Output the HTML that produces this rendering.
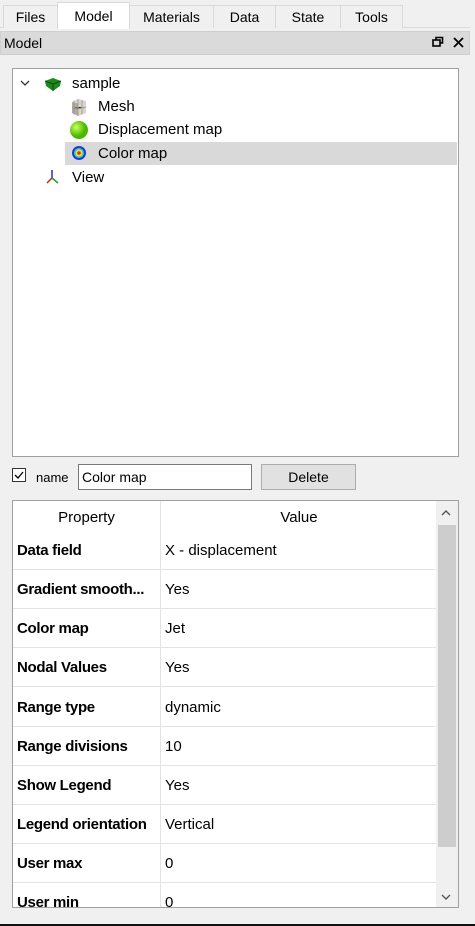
<!DOCTYPE html><html><head><style>
*{margin:0;padding:0;box-sizing:border-box}
body{width:475px;height:926px;background:#f0f0f0;font-family:"Liberation Sans",sans-serif;font-size:15px;color:#000;position:relative;overflow:hidden}
.a{position:absolute}
.tab{position:absolute;top:5px;height:23px;border:1px solid #d9d9d9;border-bottom:none;background:#f0f0f0;text-align:center;line-height:22px;font-size:14px}
.row{position:absolute;left:13px;width:423px;height:39px;border-bottom:1px solid #e3e3e3}
.row .p{position:absolute;left:4px;top:0;line-height:40px;font-weight:bold;letter-spacing:-0.3px}
.row .v{position:absolute;left:152px;top:0;line-height:40px}
</style></head><body>
<div class="a" style="left:0;top:27px;width:470px;height:1px;background:#d9d9d9"></div>
<div class="tab" style="left:3px;width:55px">Files</div>
<div class="tab" style="left:129px;width:85px">Materials</div>
<div class="tab" style="left:213px;width:63px">Data</div>
<div class="tab" style="left:275px;width:66px">State</div>
<div class="tab" style="left:340px;width:63px">Tools</div>
<div class="tab" style="left:57px;top:2px;height:27px;width:73px;background:#fff;line-height:26px">Model</div>
<div class="a" style="left:0;top:31px;width:470px;height:24px;background:#dadada;border:1px solid #cfcfcf"></div>
<div class="a" style="left:4px;top:35px;font-size:14px">Model</div>
<svg class="a" style="left:432px;top:36px" width="12" height="12"><rect x="1" y="4" width="7" height="6" fill="none" stroke="#000" stroke-width="1.6"/><path d="M4 4V1.5h6.5V7H8" fill="none" stroke="#000" stroke-width="1.6"/></svg>
<svg class="a" style="left:453px;top:37px" width="11" height="11"><path d="M1 1L10 10M10 1L1 10" stroke="#000" stroke-width="1.8"/></svg>
<div class="a" style="left:12px;top:68px;width:447px;height:389px;background:#fff;border:1px solid #a0a0a0"></div>
<div class="a" style="left:65px;top:142px;width:392px;height:23px;background:#d9d9d9"></div>
<svg class="a" style="left:20px;top:79px" width="10" height="8"><path d="M1 2L5 6L9 2" fill="none" stroke="#333" stroke-width="1.3"/></svg>
<svg class="a" style="left:43px;top:76px" width="20" height="16"><path d="M2 5L10 2L18 5L17 10L10 15L3 10Z" fill="#1a8a1a"/><path d="M2 5L10 8L18 5M10 8V15" stroke="#0a4a0a" fill="none"/></svg>
<div class="a" style="left:72px;top:75px">sample</div>
<svg class="a" style="left:69px;top:97px" width="20" height="20"><path d="M3 5L9 2L17 4V16L9 19L3 16Z" fill="#d8d4cc"/><path d="M9 2V19M3 10.5L9 12L17 10M5 3.5V17.5M13 3V17.5" stroke="#a8a29a"/><path d="M3 5L9 6.5V19L3 16Z" fill="#8a857d" opacity=".5"/></svg>
<div class="a" style="left:98px;top:98px">Mesh</div>
<svg class="a" style="left:69px;top:120px" width="20" height="20"><defs><radialGradient id="g" cx=".35" cy=".35"><stop offset="0" stop-color="#c8ff60"/><stop offset="1" stop-color="#4ab800"/></radialGradient></defs><circle cx="10" cy="10" r="9" fill="url(#g)"/></svg>
<div class="a" style="left:98px;top:121px">Displacement map</div>
<svg class="a" style="left:71px;top:145px" width="16" height="16"><circle cx="8" cy="8" r="7" fill="#1a3fd0"/><circle cx="8" cy="8" r="5" fill="#2ec9e0"/><circle cx="8" cy="8" r="3.5" fill="#e8e020"/><circle cx="8" cy="8" r="1.8" fill="#e03020"/></svg>
<div class="a" style="left:98px;top:145px">Color map</div>
<svg class="a" style="left:44px;top:168px" width="18" height="18"><path d="M8 2V10" stroke="#2030c0" stroke-width="1.5"/><path d="M8 10L3 15" stroke="#d02020" stroke-width="1.5"/><path d="M8 10L14 15" stroke="#20a020" stroke-width="1.5"/></svg>
<div class="a" style="left:72px;top:169px">View</div>
<div class="a" style="left:12px;top:468px;width:14px;height:14px;border:1px solid #333;background:#fff"></div>
<svg class="a" style="left:13px;top:469px" width="12" height="12"><path d="M2 6L5 9L10 3" fill="none" stroke="#000" stroke-width="1.3"/></svg>
<div class="a" style="left:36px;top:470px;font-size:13px">name</div>
<div class="a" style="left:78px;top:464px;width:174px;height:26px;background:#fff;border:1px solid #7a7a7a;padding:4px 3px;font-size:14px">Color map</div>
<div class="a" style="left:261px;top:464px;width:95px;height:26px;background:#e1e1e1;border:1px solid #adadad;text-align:center;line-height:24px;font-size:14px">Delete</div>
<div class="a" style="left:12px;top:500px;width:447px;height:408px;background:#fff;border:1px solid #a0a0a0;overflow:hidden">
<div class="a" style="left:147px;top:0;width:1px;height:408px;background:#e3e3e3"></div>
<div class="a" style="left:0;top:0;width:147px;line-height:34px;text-align:center">Property</div>
<div class="a" style="left:148px;top:0;width:276px;line-height:34px;text-align:center">Value</div>
<div class="a" style="left:423px;top:0;width:22px;height:406px;background:#f0f0f0"></div>
<div class="a" style="left:425px;top:24px;width:18px;height:322px;background:#cdcdcd"></div>
<svg class="a" style="left:428px;top:8px" width="10" height="8"><path d="M1 6L5 2L9 6" fill="none" stroke="#555" stroke-width="1.4"/></svg>
<svg class="a" style="left:428px;top:392px" width="10" height="8"><path d="M1 2L5 6L9 2" fill="none" stroke="#555" stroke-width="1.4"/></svg>
</div>
<div class="a" style="left:13px;top:531px;width:423px;height:376px;overflow:hidden">
<div class="row" style="left:0;top:0"><span class="p">Data field</span><span class="v">X - displacement</span></div>
<div class="row" style="left:0;top:39px"><span class="p">Gradient smooth...</span><span class="v">Yes</span></div>
<div class="row" style="left:0;top:78px"><span class="p">Color map</span><span class="v">Jet</span></div>
<div class="row" style="left:0;top:117px"><span class="p">Nodal Values</span><span class="v">Yes</span></div>
<div class="row" style="left:0;top:157px"><span class="p">Range type</span><span class="v">dynamic</span></div>
<div class="row" style="left:0;top:196px"><span class="p">Range divisions</span><span class="v">10</span></div>
<div class="row" style="left:0;top:235px"><span class="p">Show Legend</span><span class="v">Yes</span></div>
<div class="row" style="left:0;top:274px"><span class="p">Legend orientation</span><span class="v">Vertical</span></div>
<div class="row" style="left:0;top:313px"><span class="p">User max</span><span class="v">0</span></div>
<div class="row" style="left:0;top:352px"><span class="p">User min</span><span class="v">0</span></div>
</div>
<div class="a" style="left:0;top:924px;width:475px;height:2px;background:#111"></div>
</body></html>
